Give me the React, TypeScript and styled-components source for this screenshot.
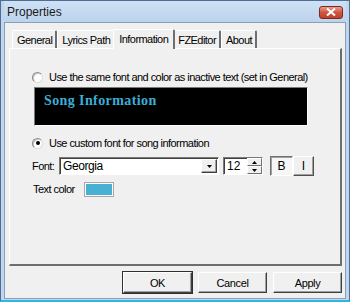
import React from 'react';
import styled, { createGlobalStyle } from 'styled-components';

const GlobalStyle = createGlobalStyle`
  * {
    margin: 0;
    padding: 0;
    box-sizing: border-box;
  }

  html, body {
    width: 350px;
    height: 302px;
    overflow: hidden;
    background: #ffffff;
    font-family: "Liberation Sans", Arial, sans-serif;
    font-size: 11px;
    letter-spacing: -0.55px;
    color: #000;
  }

  #root {
    width: 100%;
    height: 100%;
  }
`;

const Window = styled.div`
  width: 350px;
  height: 302px;
  display: flex;
  flex-direction: column;
  background: #bfd6ee;
  border: 1px solid #4f6f90;
  border-bottom: 2px solid #2fb6e6;
  padding: 0 3px 1px 3px;
`;

const TitleBar = styled.div`
  height: 21px;
  display: flex;
  align-items: center;
  justify-content: space-between;
  padding: 0 3px 0 3px;
  background: linear-gradient(#cfe1f5, #bcd3ec);
`;

const Title = styled.span`
  font-size: 12px;
  letter-spacing: 0;
  color: #1a1a1a;
`;

const CloseButton = styled.div`
  width: 24px;
  height: 13px;
  margin-top: 1px;
  border: 1px solid #7a2a20;
  border-radius: 3px;
  background: linear-gradient(#e99c8c, #d0553f 50%, #c0402c);
  display: flex;
  align-items: center;
  justify-content: center;
`;

const Body = styled.div`
  flex: 1;
  display: flex;
  flex-direction: column;
  background: #f0f0f0;
  border: 1px solid #8aa0b8;
  padding: 5px 3px 5px 4px;
`;

const TabStrip = styled.div`
  display: flex;
  align-items: flex-end;
  height: 20px;
  padding-left: 3px;
  position: relative;
  z-index: 1;
`;

const Tab = styled.div<{ $active?: boolean }>`
  height: ${(p) => (p.$active ? '20px' : '18px')};
  padding: ${(p) => (p.$active ? '0 5px 2px 5px' : '0 3px 0 4px')};
  margin: ${(p) => (p.$active ? '0 -2px -1px -2px' : '0')};
  display: flex;
  align-items: center;
  background: #f0f0f0;
  border-top: 1px solid #ffffff;
  border-left: 1px solid #ffffff;
  border-right: 2px solid #6e6e6e;
  border-radius: 2px 2px 0 0;
  white-space: nowrap;
  position: relative;
  z-index: ${(p) => (p.$active ? 2 : 1)};
`;

const Panel = styled.div`
  flex: 1;
  background: #f0f0f0;
  border-top: 1px solid #ffffff;
  border-left: 1px solid #ffffff;
  border-right: 2px solid #6e6e6e;
  border-bottom: 2px solid #6e6e6e;
  padding: 21px 0 0 22px;
  display: flex;
  flex-direction: column;
`;

const RadioRow = styled.label<{ $gap?: number }>`
  display: flex;
  align-items: center;
  gap: 6px;
  height: 14px;
  margin-top: ${(p) => p.$gap ?? 0}px;
  white-space: nowrap;
`;

const Radio = styled.span<{ $checked?: boolean }>`
  width: 11px;
  height: 11px;
  border-radius: 50%;
  background: #ffffff;
  border: 1px solid #8a8a8a;
  border-right-color: #dcdcdc;
  border-bottom-color: #dcdcdc;
  box-shadow: inset 1px 1px 0 #c8c8c8;
  display: flex;
  align-items: center;
  justify-content: center;

  &::after {
    content: '';
    width: 4px;
    height: 4px;
    border-radius: 50%;
    background: ${(p) => (p.$checked ? '#000' : 'transparent')};
  }
`;

const Preview = styled.div`
  width: 274px;
  height: 39px;
  margin: 3px 0 0 2px;
  background: #000;
  border: 1px solid #7a7a7a;
  border-right-color: #ffffff;
  border-bottom-color: #ffffff;
  padding: 5px 0 0 9px;
  font-family: "Liberation Serif", Georgia, serif;
  font-weight: bold;
  font-size: 14px;
  letter-spacing: 0.4px;
  color: #3aaed6;
`;

const FontRow = styled.div`
  display: flex;
  align-items: center;
  margin-top: 6px;
  height: 20px;
`;

const Label = styled.span`
  width: 27px;
`;

const Combo = styled.div`
  width: 160px;
  height: 18px;
  background: #ffffff;
  border: 1px solid #7a7a7a;
  border-right-color: #ffffff;
  border-bottom-color: #ffffff;
  box-shadow: inset 1px 1px 0 #404040;
  display: flex;
  align-items: center;
  justify-content: space-between;
  padding-left: 3px;
  font-size: 12px;
  letter-spacing: -0.4px;
`;

const DropButton = styled.div`
  width: 16px;
  height: 14px;
  margin-right: 1px;
  background: #f0f0f0;
  border: 1px solid #ffffff;
  border-right-color: #404040;
  border-bottom-color: #404040;
  box-shadow: inset -1px -1px 0 #a0a0a0;
  display: flex;
  align-items: center;
  justify-content: center;
`;

const Spin = styled.div`
  width: 40px;
  height: 18px;
  margin-left: 4px;
  background: #ffffff;
  border: 1px solid #7a7a7a;
  border-right-color: #ffffff;
  border-bottom-color: #ffffff;
  box-shadow: inset 1px 1px 0 #404040;
  display: flex;
  align-items: center;
  justify-content: space-between;
  padding-left: 3px;
  font-size: 12px;
  letter-spacing: 0;
`;

const SpinArrows = styled.div`
  width: 15px;
  height: 16px;
  display: flex;
  flex-direction: column;
`;

const SpinHalf = styled.div`
  flex: 1;
  background: #f0f0f0;
  border: 1px solid #ffffff;
  border-right-color: #707070;
  border-bottom-color: #707070;
  display: flex;
  align-items: center;
  justify-content: center;
`;

const StyleButton = styled.div<{ $pressed?: boolean }>`
  width: ${(p) => (p.$pressed ? '23px' : '21px')};
  height: 20px;
  margin-left: ${(p) => (p.$pressed ? '7px' : '0')};
  display: flex;
  align-items: center;
  justify-content: center;
  font-size: 12px;
  letter-spacing: 0;
  background: ${(p) => (p.$pressed ? '#f6f6f6' : '#f0f0f0')};
  border: 1px solid ${(p) => (p.$pressed ? '#707070' : '#ffffff')};
  border-right-color: ${(p) => (p.$pressed ? '#ffffff' : '#505050')};
  border-bottom-color: ${(p) => (p.$pressed ? '#ffffff' : '#505050')};
  box-shadow: ${(p) => (p.$pressed ? 'inset 1px 1px 0 #a0a0a0' : 'inset -1px -1px 0 #a0a0a0')};
`;

const ColorRow = styled.div`
  display: flex;
  align-items: center;
  gap: 10px;
  margin-top: 6px;
  height: 14px;
  padding-left: 1px;
`;

const Swatch = styled.div<{ $color: string }>`
  width: 28px;
  height: 13px;
  background: ${(p) => p.$color};
  border: 1px solid #ffffff;
  outline: 1px solid #a8a8a8;
`;

const ButtonRow = styled.div`
  display: flex;
  justify-content: flex-end;
  gap: 6px;
  margin-top: 6px;
`;

const DialogButton = styled.button<{ $default?: boolean }>`
  width: 69px;
  height: 21px;
  font-family: "Liberation Sans", Arial, sans-serif;
  font-size: 11px;
  letter-spacing: -0.4px;
  color: #000;
  background: #f0f0f0;
  border: 1px solid #ffffff;
  border-right-color: #404040;
  border-bottom-color: #404040;
  box-shadow: inset -1px -1px 0 #a0a0a0;
  outline: ${(p) => (p.$default ? '1px solid #303030' : 'none')};
`;

const Arrow = ({ up }: { up?: boolean }) => (
  <svg width="5" height="3" viewBox="0 0 5 3">
    <path d={up ? 'M2.5 0L5 3H0z' : 'M0 0H5L2.5 3z'} fill="#000" />
  </svg>
);

const App: React.FC = () => {
  return (
    <>
      <GlobalStyle />
      <Window>
        <TitleBar>
          <Title>Properties</Title>
          <CloseButton>
            <svg width="10" height="8" viewBox="0 0 10 8">
              <path d="M1 0.5L9 7.5M9 0.5L1 7.5" stroke="#fff" strokeWidth="2" />
            </svg>
          </CloseButton>
        </TitleBar>
        <Body>
          <TabStrip>
            <Tab>General</Tab>
            <Tab>Lyrics Path</Tab>
            <Tab $active>Information</Tab>
            <Tab>FZEditor</Tab>
            <Tab>About</Tab>
          </TabStrip>
          <Panel>
            <RadioRow>
              <Radio />
              Use the same font and color as inactive text (set in General)
            </RadioRow>
            <Preview>Song Information</Preview>
            <RadioRow $gap={10}>
              <Radio $checked />
              Use custom font for song information
            </RadioRow>
            <FontRow>
              <Label>Font:</Label>
              <Combo>
                <span>Georgia</span>
                <DropButton>
                  <Arrow />
                </DropButton>
              </Combo>
              <Spin>
                <span>12</span>
                <SpinArrows>
                  <SpinHalf>
                    <Arrow up />
                  </SpinHalf>
                  <SpinHalf>
                    <Arrow />
                  </SpinHalf>
                </SpinArrows>
              </Spin>
              <StyleButton $pressed>B</StyleButton>
              <StyleButton>I</StyleButton>
            </FontRow>
            <ColorRow>
              Text color
              <Swatch $color="#48b0d2" />
            </ColorRow>
          </Panel>
          <ButtonRow>
            <DialogButton $default>OK</DialogButton>
            <DialogButton>Cancel</DialogButton>
            <DialogButton>Apply</DialogButton>
          </ButtonRow>
        </Body>
      </Window>
    </>
  );
};

export default App;
